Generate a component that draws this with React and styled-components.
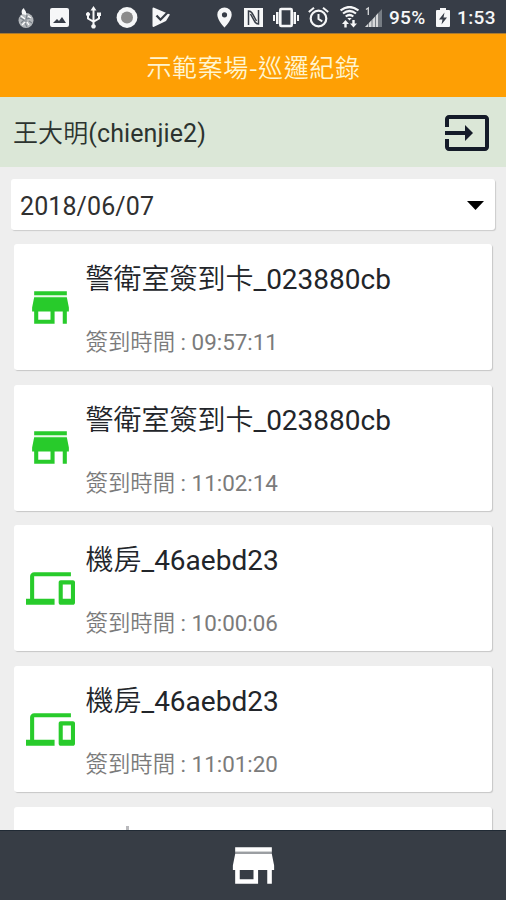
import React from 'react';
import styled, { createGlobalStyle } from 'styled-components';

const GlobalStyle = createGlobalStyle`
  * { box-sizing: border-box; }
  body { margin: 0; background: #eeeeee; }
`;

const Screen = styled.div`
  width: 506px;
  height: 900px;
  display: flex;
  flex-direction: column;
  overflow: hidden;
  background: #eeeeee;
  font-family: Roboto, 'Noto Sans CJK TC DemiLight', 'Noto Sans CJK TC', sans-serif;
  white-space: nowrap;
`;

const StatusBar = styled.header`
  flex: 0 0 34px;
  display: flex;
  align-items: flex-start;
  justify-content: space-between;
  padding: 6px 10px 0 16px;
  background: #373d47;
  border-bottom: 1px solid #a97a31;
  color: #f6f7f8;
`;

const StatusGroup = styled.div`
  display: flex;
  align-items: center;
  height: 24px;
`;

const StatusIcon = styled.svg`
  display: block;
  flex: none;
  width: ${(p) => p.$w}px;
  height: 24px;
  margin-right: ${(p) => p.$gap || 0}px;
  fill: #f6f7f8;
`;

const StatusText = styled.span`
  width: ${(p) => p.$w}px;
  margin-right: ${(p) => p.$gap || 0}px;
  font-size: 19px;
  font-weight: 500;
  line-height: 24px;
  letter-spacing: ${(p) => p.$track || 0}px;
`;

const TitleBar = styled.h1`
  flex: 0 0 63px;
  margin: 0;
  padding: 2px 0 1px 1px;
  background: #fe9f04;
  color: #fff5d0;
  font-family: 'Noto Sans CJK TC', sans-serif;
  font-size: 25px;
  font-weight: 350;
  line-height: 60px;
  text-align: center;
  letter-spacing: 0.6px;
`;

const UserBar = styled.section`
  flex: 0 0 70px;
  display: flex;
  align-items: center;
  justify-content: space-between;
  padding: 1px 15px 0 13px;
  background: #dbe7d7;
  color: #2c332f;
`;

const UserName = styled.span`
  padding-top: 3px;
  font-size: 25px;
  line-height: 36px;
  letter-spacing: 0.1px;
`;

const ExitButton = styled.button`
  width: 48px;
  height: 48px;
  padding: 0;
  border: 0;
  background: none;
  color: #141b28;
`;

const DateSelect = styled.div`
  flex: 0 0 51px;
  display: flex;
  align-items: center;
  justify-content: space-between;
  margin: 12px 11px 14px;
  padding: 4px 11px 0 9px;
  border-radius: 3px;
  background: #fff;
  box-shadow: 1px 1px 1px #cbcbcb;
  color: #303030;
  font-size: 25px;
  line-height: 36px;
  letter-spacing: 0.1px;
`;

const Caret = styled.svg`
  width: 17px;
  height: 9px;
  margin-top: -3px;
  fill: #000;
`;

const List = styled.main`
  flex: 1;
  min-height: 0;
  overflow: hidden;
  display: flex;
  flex-direction: column;
  gap: 14.7px;
  padding: 0 14px;
`;

const Card = styled.article`
  flex: 0 0 126px;
  display: flex;
  align-items: center;
  border-radius: 3px;
  background: #fff;
  box-shadow: 1px 1px 1px #c6c6c6;
`;

const CardIcon = styled.div`
  flex: 0 0 49px;
  height: 49px;
  margin: 0 10.500px 0 12px;
  color: #28cb2b;
`;

const CardBody = styled.div`
  height: 126px;
  padding-top: 16px;
`;

const CardTitle = styled.h2`
  margin: 0 0 24px;
  color: #22252a;
  font-size: 28px;
  font-weight: 400;
  line-height: 40px;
`;

const CardTime = styled.p`
  margin: 0;
  color: #7b7b7b;
  font-size: 22.4px;
  line-height: 36px;
`;

const PeekMark = styled.span`
  align-self: flex-start;
  width: 3px;
  height: 4px;
  margin: 19px 0 0 112px;
  background: #b9b9bc;
`;

const BottomBar = styled.nav`
  flex: 0 0 70px;
  display: flex;
  align-items: center;
  justify-content: center;
  background: #373d45;
  border-top: 1px solid #202a34;
  color: #fff;
`;

const TabButton = styled.button`
  width: 55px;
  height: 55px;
  padding: 0;
  border: 0;
  background: none;
  color: inherit;
`;

const Glyph = styled.svg`
  display: block;
  width: 100%;
  height: 100%;
  fill: currentColor;
`;

const StoreIcon = ({ seam = 0.1 }) => (
  <Glyph viewBox="0 0 24 24">
    <path d="M20 4H4v2h16V4zm1 10v-2l-1-5H4l-1 5v2h1v6h10v-6h4v6h2v-6h1zm-9 4H6v-4h6v4z" />
    <path d="M4 6h16v1H4z" opacity={seam} />
  </Glyph>
);

const DevicesIcon = () => (
  <Glyph viewBox="0 0 24 24">
    <path d="M4 6h18V4H4c-1.1 0-2 .9-2 2v11H0v3h14v-3H4V6zm19 2h-6c-.55 0-1 .45-1 1v10c0 .55.45 1 1 1h6c.55 0 1-.45 1-1V9c0-.55-.45-1-1-1zm-1 9h-4v-7h4v7z" />
  </Glyph>
);

const ExitIcon = () => (
  <Glyph viewBox="0 0 24 24">
    <path d="M21 3.01H3c-1.1 0-2 .9-2 2V9h2V4.99h18v14.03H3V15H1v4.01c0 1.1.9 1.98 2 1.98h18c1.1 0 2-.88 2-1.98v-14c0-1.11-.9-2-2-2zM11 16l4-4-4-4v3H1v2h10v3z" />
  </Glyph>
);

const records = [
  { icon: StoreIcon, title: '警衛室簽到卡_023880cb', time: '09:57:11' },
  { icon: StoreIcon, title: '警衛室簽到卡_023880cb', time: '11:02:14' },
  { icon: DevicesIcon, title: '機房_46aebd23', time: '10:00:06' },
  { icon: DevicesIcon, title: '機房_46aebd23', time: '11:01:20' },
];

const Notifications = () => (
  <StatusGroup>
    <StatusIcon $w={19} $gap={15} viewBox="0 0 19 24">
      <circle cx="10" cy="14.5" r="7.5" fill="#b4b8bc" />
      <path d="M6 8c-1-3 0-5 2-6 0 2 3 3 2 7z" />
      <path d="M4 12l4 2-3 3M11 9l-1 4 5-1M9 17l2 4M13 15l3 2M8 15h3" fill="none" stroke="#7d848b" strokeWidth="1.2" />
      <path d="M5 10l4 3M12 10l3 2M6 19l3-3M13 19l-2-3" fill="none" stroke="#fff" strokeWidth="1.2" />
    </StatusIcon>
    <StatusIcon $w={19} $gap={17} viewBox="0 0 19 24">
      <path fillRule="evenodd" d="M2 2h15a2 2 0 0 1 2 2v15a2 2 0 0 1-2 2H2a2 2 0 0 1-2-2V4a2 2 0 0 1 2-2zm1 15h13l-4-6-3 4-2-2z" />
    </StatusIcon>
    <StatusIcon $w={15} $gap={15} viewBox="0 0 15 24">
      <path d="M7.5 0l3 4.5h-2V14l3.500-2v-2H11V6.500h4V10h-1v3l-5.500 3.200v2a2.300 2.300 0 1 1-2 0v-2L1 13v-3a2 2 0 1 1 2 0v2l3.500 2V4.500h-2z" />
    </StatusIcon>
    <StatusIcon $w={22} $gap={14} viewBox="0 0 22 24">
      <circle cx="11" cy="11.500" r="10.400" />
      <circle cx="11" cy="11.500" r="6" fill="#8b8b8b" />
    </StatusIcon>
    <StatusIcon $w={19} viewBox="0 0 19 24">
      <path d="M1.500 1.500L18 8.500 14 15 1.500 21a1 1 0 0 1-1-1V2.500a1 1 0 0 1 1-1z" />
      <path d="M4.500 9.500l4 4.200L16 6" fill="none" stroke="#373d47" strokeWidth="2.300" />
    </StatusIcon>
  </StatusGroup>
);

const Indicators = () => (
  <StatusGroup>
    <StatusIcon $w={15} $gap={12} viewBox="0 0 15 24">
      <path fillRule="evenodd" d="M7.500 1.500A7.200 7.200 0 0 0 .3 8.700C.3 14 7.500 21.500 7.500 21.500s7.200-7.500 7.200-12.800a7.200 7.200 0 0 0-7.200-7.200zm0 4.700a2.600 2.600 0 1 1 0 5.200 2.600 2.600 0 0 1 0-5.200z" />
    </StatusIcon>
    <StatusIcon $w={19} $gap={10} viewBox="0 0 19 24">
      <path d="M0 2h19v19H0z" />
      <path d="M4.500 19V5c2 0 2.500.5 3.500 2l4.500 8M14.500 4v14c-2 0-2.500-.5-3.500-2L6.500 8" fill="none" stroke="#373d47" strokeWidth="1.500" />
    </StatusIcon>
    <StatusIcon $w={26} $gap={9} viewBox="0 0 26 24">
      <rect x="7.300" y="3" width="11.400" height="17" rx="1" fill="none" stroke="#f6f7f8" strokeWidth="2.600" />
      <path d="M0 9h2v6H0zM3 6h2.500v12H3zM20.500 6H23v12h-2.500zM24 9h2v6h-2z" />
    </StatusIcon>
    <StatusIcon $w={21} $gap={11} viewBox="0 0 21 24">
      <circle cx="10.500" cy="12.500" r="7.800" fill="none" stroke="#f6f7f8" strokeWidth="2.200" />
      <path d="M.8 6L6 1.800M20.200 6L15 1.800M10.500 8v5l3.800 2.300" fill="none" stroke="#f6f7f8" strokeWidth="2" />
    </StatusIcon>
    <StatusIcon $w={19} $gap={6} viewBox="0 0 19 24">
      <path d="M.5 4.500Q9.500-2.500 18.500 4.500M3 7.500q6.500-5 13 0M5.700 10.500q3.800-3 7.600 0" fill="none" stroke="#f6f7f8" strokeWidth="2.200" />
      <path d="M7.300 12h4.400l-2.200 2.500zM5.500 14l3.500 4H6.700v3.500H4.300V18H2zM13.500 21.500l-3.500-4h2.300V14h2.400v3.500H17z" />
    </StatusIcon>
    <StatusIcon $w={17} $gap={7} viewBox="0 0 17 24">
      <path d="M0 21L17 3v18z" fill="#777d84" />
      <path d="M0 21l3-3v3zM4 17l2.500-2.700V21H4zM7.500 13.500l2.500-2.700V21H7.500zM11 9.500l2-2.200V21h-2z" fill="#d7d9db" />
      <path d="M1 3.500L3.300 2v7" fill="none" stroke="#d7d9db" strokeWidth="1.300" />
    </StatusIcon>
    <StatusText $w={37} $gap={10} $track={0.3}>95%</StatusText>
    <StatusIcon $w={14} $gap={7} viewBox="0 0 14 24">
      <path d="M4 2h6v2h3a1 1 0 0 1 1 1v15a1 1 0 0 1-1 1H1a1 1 0 0 1-1-1V5a1 1 0 0 1 1-1h3z" />
      <path d="M8.500 6.500L3 13.500h3.500l-1 5 5.500-7H7.500z" fill="#373d47" />
    </StatusIcon>
    <StatusText $w={39} $track={0.4}>1:53</StatusText>
  </StatusGroup>
);

export default function App() {
  return (
    <Screen>
      <GlobalStyle />
      <StatusBar>
        <Notifications />
        <Indicators />
      </StatusBar>
      <TitleBar>示範案場-巡邏紀錄</TitleBar>
      <UserBar>
        <UserName>王大明(chienjie2)</UserName>
        <ExitButton aria-label="登出">
          <ExitIcon />
        </ExitButton>
      </UserBar>
      <DateSelect>
        <span>2018/06/07</span>
        <Caret viewBox="0 0 17 9">
          <path d="M0 0h17L8.500 9z" />
        </Caret>
      </DateSelect>
      <List>
        {records.map(({ icon: Icon, title, time }, i) => (
          <Card key={i}>
            <CardIcon>
              <Icon />
            </CardIcon>
            <CardBody>
              <CardTitle>{title}</CardTitle>
              <CardTime>簽到時間 : {time}</CardTime>
            </CardBody>
          </Card>
        ))}
        <Card>
          <PeekMark />
        </Card>
      </List>
      <BottomBar>
        <TabButton aria-label="巡邏紀錄">
          <StoreIcon seam={0.5} />
        </TabButton>
      </BottomBar>
    </Screen>
  );
}
